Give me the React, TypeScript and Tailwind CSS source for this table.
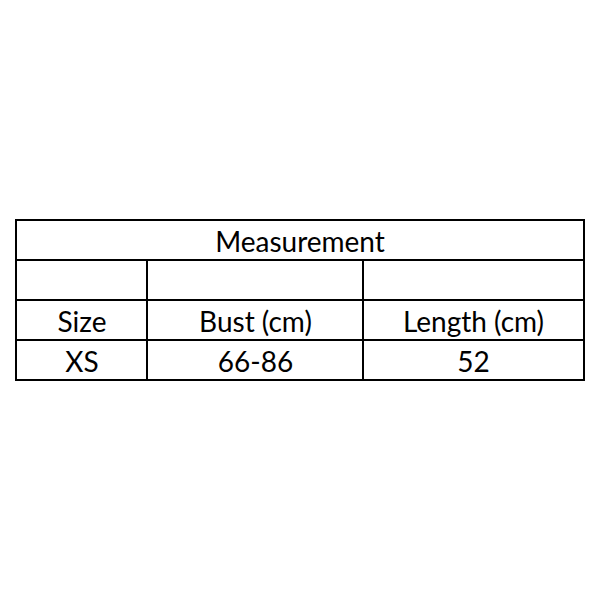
export default function App() {
  const cell = "border-2 border-black text-center align-middle p-0 pt-[1px] h-[40px]";
  return (
    <div className="w-[600px] h-[600px] bg-white flex items-center justify-center" style={{ fontFamily: "Lato, 'Open Sans', sans-serif" }}>
      <table className="w-[567px] border-collapse table-fixed text-[28px] leading-none text-black">
        <colgroup>
          <col className="w-[131px]" />
          <col className="w-[216px]" />
          <col className="w-[220px]" />
        </colgroup>
        <tbody>
          <tr>
            <td colSpan={3} className={cell}>Measurement</td>
          </tr>
          <tr>
            <td className={cell}></td>
            <td className={cell}></td>
            <td className={cell}></td>
          </tr>
          <tr>
            <td className={cell}>Size</td>
            <td className={cell}>Bust (cm)</td>
            <td className={cell}>Length (cm)</td>
          </tr>
          <tr>
            <td className={cell}>XS</td>
            <td className={cell}>66-86</td>
            <td className={cell}>52</td>
          </tr>
        </tbody>
      </table>
    </div>
  );
}
